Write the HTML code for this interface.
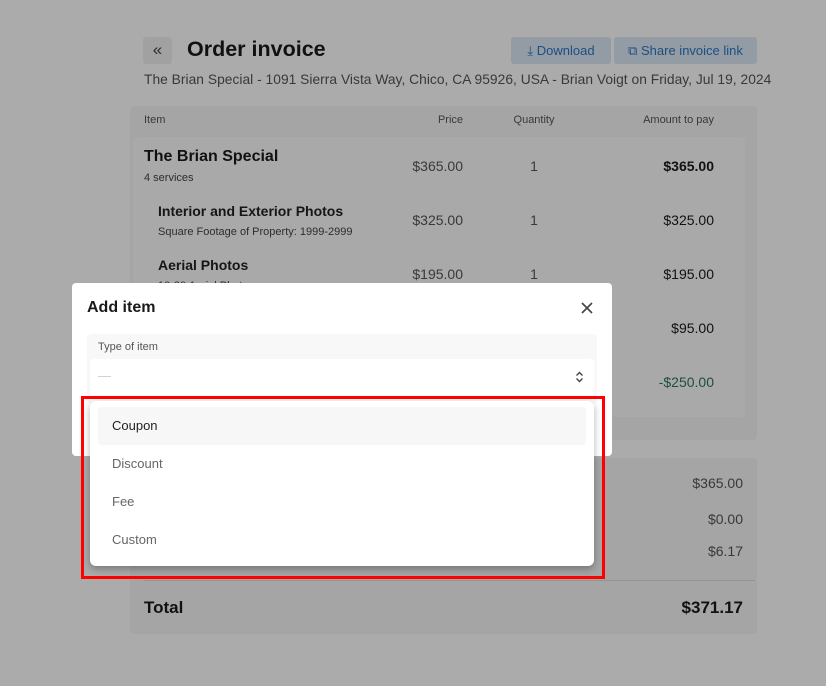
<!DOCTYPE html>
<html><head><meta charset="utf-8"><style>
*{box-sizing:border-box;margin:0;padding:0}
body{width:826px;height:686px;overflow:hidden;background:#fff;font-family:"Liberation Sans",sans-serif;position:relative;color:#1a1a1a}
.a{position:absolute;white-space:nowrap}
.r{text-align:right}
.ov{position:absolute;inset:0;background:rgba(0,0,0,0.33)}
</style></head><body>
<div class="a" style="left:143px;top:37px;width:29px;height:27px;background:#f0f0f0;border-radius:3px;text-align:center;line-height:26px;font-size:17px;color:#444">«</div>
<div class="a" style="left:187px;top:37px;font-size:21.5px;font-weight:bold">Order invoice</div>
<div class="a" style="left:511px;top:37px;width:100px;height:27px;background:#dbe8f5;border-radius:3px;color:#2a78c0;font-size:13px;line-height:27px;text-align:center">⤓ Download</div>
<div class="a" style="left:614px;top:37px;width:143px;height:27px;background:#dbe8f5;border-radius:3px;color:#2a78c0;font-size:13px;line-height:27px;text-align:center">⧉ Share invoice link</div>
<div class="a" style="left:144px;top:72px;font-size:13.8px;color:#555;letter-spacing:0.02px">The Brian Special - 1091 Sierra Vista Way, Chico, CA 95926, USA - Brian Voigt on Friday, Jul 19, 2024</div>

<div class="a" style="left:130px;top:106px;width:627px;height:334px;background:#f6f6f6;border-radius:4px"></div>
<div class="a" style="left:133px;top:137px;width:612px;height:280px;background:#fcfcfc;border-radius:4px"></div>
<div class="a" style="left:144px;top:114px;font-size:11px;color:#555">Item</div>
<div class="a r" style="left:363px;width:100px;top:114px;font-size:11px;color:#555">Price</div>
<div class="a" style="left:484px;width:100px;text-align:center;top:114px;font-size:11px;color:#555">Quantity</div>
<div class="a r" style="left:564px;width:150px;top:114px;font-size:11px;color:#555">Amount to pay</div>

<div class="a" style="left:144px;top:148px;font-size:16px;font-weight:bold">The Brian Special</div>
<div class="a" style="left:144px;top:172px;font-size:11px;color:#444">4 services</div>
<div class="a r" style="left:363px;width:100px;top:158px;font-size:14px;color:#555">$365.00</div>
<div class="a" style="left:484px;width:100px;text-align:center;top:158px;font-size:14px;color:#555">1</div>
<div class="a r" style="left:564px;width:150px;top:158px;font-size:14px;font-weight:bold">$365.00</div>

<div class="a" style="left:158px;top:203px;font-size:14px;font-weight:bold;color:#222">Interior and Exterior Photos</div>
<div class="a" style="left:158px;top:226px;font-size:11px;color:#444">Square Footage of Property: 1999-2999</div>
<div class="a r" style="left:363px;width:100px;top:212px;font-size:14px;color:#555">$325.00</div>
<div class="a" style="left:484px;width:100px;text-align:center;top:212px;font-size:14px;color:#555">1</div>
<div class="a r" style="left:564px;width:150px;top:212px;font-size:14px">$325.00</div>

<div class="a" style="left:158px;top:257px;font-size:14px;font-weight:bold;color:#222">Aerial Photos</div>
<div class="a" style="left:158px;top:280px;font-size:11px;color:#444">10-20 Aerial Photos</div>
<div class="a r" style="left:363px;width:100px;top:266px;font-size:14px;color:#555">$195.00</div>
<div class="a" style="left:484px;width:100px;text-align:center;top:266px;font-size:14px;color:#555">1</div>
<div class="a r" style="left:564px;width:150px;top:266px;font-size:14px">$195.00</div>
<div class="a r" style="left:564px;width:150px;top:320px;font-size:14px">$95.00</div>
<div class="a r" style="left:564px;width:150px;top:374px;font-size:14px;color:#2a7a55">-$250.00</div>

<div class="a" style="left:130px;top:458px;width:627px;height:176px;background:#f6f6f6;border-radius:4px"></div>
<div class="a r" style="left:593px;width:150px;top:475px;font-size:14px;color:#555">$365.00</div>
<div class="a r" style="left:593px;width:150px;top:511px;font-size:14px;color:#555">$0.00</div>
<div class="a r" style="left:593px;width:150px;top:543px;font-size:14px;color:#555">$6.17</div>
<div class="a" style="left:144px;top:580px;width:611px;height:1px;background:#ddd"></div>
<div class="a" style="left:144px;top:598px;font-size:17px;font-weight:bold">Total</div>
<div class="a r" style="left:593px;width:150px;top:598px;font-size:17px;font-weight:bold">$371.17</div>

<div class="ov"></div>

<div class="a" style="left:72px;top:283px;width:540px;height:173px;background:#fff;border-radius:4px"></div>
<div class="a" style="left:87px;top:299px;font-size:16px;font-weight:bold">Add item</div>
<svg class="a" style="left:580px;top:301px" width="14" height="14" viewBox="0 0 14 14"><path d="M2 2L12 12M12 2L2 12" stroke="#444" stroke-width="1.6"/></svg>
<div class="a" style="left:87px;top:334px;width:510px;height:70px;background:#f8f8f8;border-radius:5px"></div>
<div class="a" style="left:98px;top:341px;font-size:11px;color:#555">Type of item</div>
<div class="a" style="left:90px;top:359px;width:504px;height:36px;background:#fff;border-radius:3px"></div>
<div class="a" style="left:98px;top:368px;font-size:13px;color:#ccc">—</div>
<svg class="a" style="left:575px;top:371px" width="9" height="12" viewBox="0 0 9 12"><path d="M1.5 4.5L4.5 1.5L7.5 4.5M1.5 7.5L4.5 10.5L7.5 7.5" fill="none" stroke="#444" stroke-width="1.4"/></svg>

<div class="a" style="left:90px;top:401px;width:504px;height:165px;background:#fff;border-radius:6px;box-shadow:0 3px 8px rgba(0,0,0,0.3)"></div>
<div class="a" style="left:98px;top:407px;width:488px;height:38px;background:#f7f7f7;border-radius:4px"></div>
<div class="a" style="left:112px;top:418px;font-size:13px;color:#222">Coupon</div>
<div class="a" style="left:112px;top:456px;font-size:13px;color:#666">Discount</div>
<div class="a" style="left:112px;top:494px;font-size:13px;color:#666">Fee</div>
<div class="a" style="left:112px;top:532px;font-size:13px;color:#666">Custom</div>
<div class="a" style="left:81px;top:396px;width:524px;height:183px;border:3px solid #f00"></div>
</body></html>
